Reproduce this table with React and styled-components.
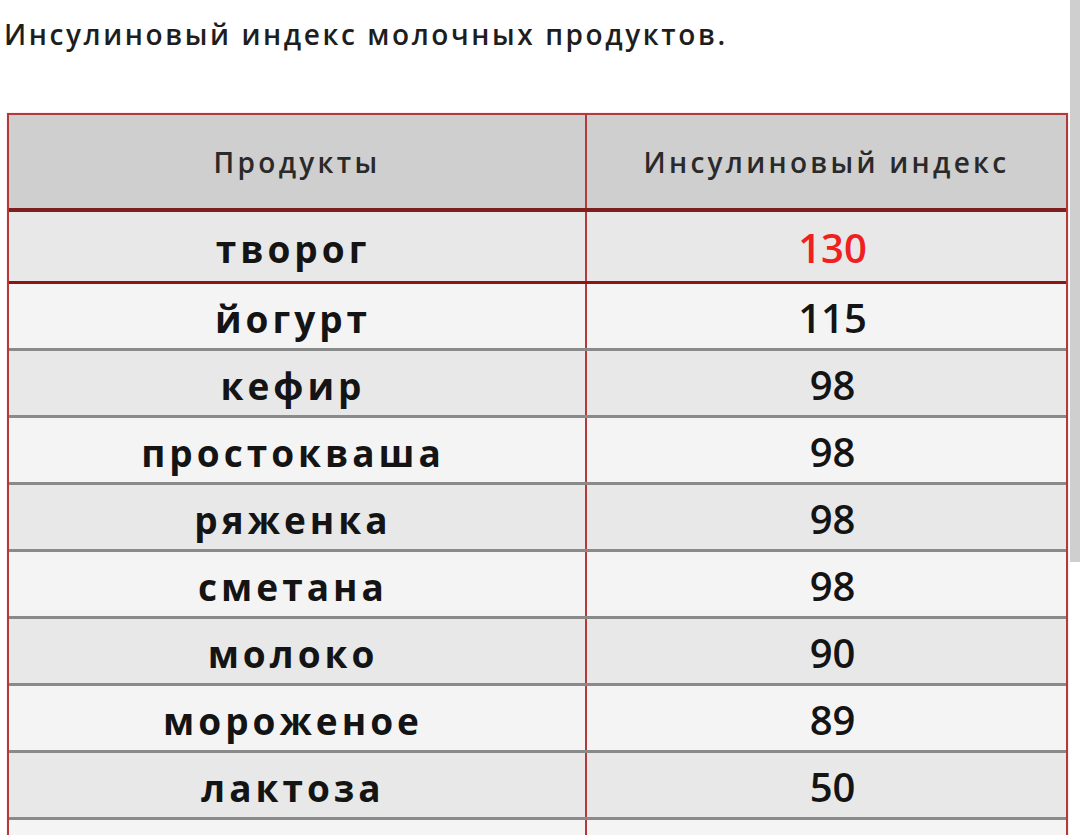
import React from "react";
import styled, { createGlobalStyle } from "styled-components";

const GlobalStyle = createGlobalStyle`
  html, body {
    margin: 0;
    padding: 0;
    background: #ffffff;
  }
  body {
    font-family: "Open Sans", "Liberation Sans", sans-serif;
    color: #1b1b1b;
  }
`;

const Page = styled.div`
  display: flex;
  align-items: flex-start;
  width: 1080px;
`;

const Main = styled.div`
  flex: 1;
  padding: 16px 2px 0 7px;
`;

const SideStrip = styled.div`
  width: 10px;
  height: 562px;
  background: #cfcfcf;
`;

const Title = styled.h1`
  margin: 0 0 61px -3px;
  font-size: 28px;
  line-height: 36px;
  font-weight: 600;
  letter-spacing: 2.6px;
  color: #1e1e1e;
`;

const Table = styled.div`
  border: 2px solid #b23a3a;
  border-bottom: none;
  box-shadow: 0 0 1px #f2a0a0;
`;

const Row = styled.div`
  display: grid;
  grid-template-columns: 576px 1fr;
  height: ${(p) => p.$height}px;
  background: ${(p) => p.$bg};
  border-bottom: ${(p) => p.$weight || 3}px solid ${(p) => p.$line};
  box-shadow: 0 1px 0 ${(p) => p.$shade};
`;

const Cell = styled.div`
  display: flex;
  align-items: center;
  justify-content: center;
  & + & {
    border-left: 2px solid #b23a3a;
  }
`;

const HeadText = styled.span`
  font-size: 28px;
  font-weight: 600;
  letter-spacing: 3.3px;
  color: #2a2a2a;
`;

const Word = styled.span`
  font-size: 37px;
  font-weight: 700;
  letter-spacing: 4px;
  color: #141414;
  transform: translate(-4px, 2px);
`;

const Value = styled.span`
  font-size: 40px;
  font-weight: 600;
  color: ${(p) => (p.$accent ? "#f02020" : "#141414")};
  transform: translate(6px, 1px);
`;

const rows = [
  { name: "творог", value: "130", accent: true },
  { name: "йогурт", value: "115" },
  { name: "кефир", value: "98" },
  { name: "простокваша", value: "98" },
  { name: "ряженка", value: "98" },
  { name: "сметана", value: "98" },
  { name: "молоко", value: "90" },
  { name: "мороженое", value: "89" },
  { name: "лактоза", value: "50" },
  { name: "сыр", value: "45" },
];

const App = () => {
  return (
    <>
      <GlobalStyle />
      <Page>
        <Main>
          <Title>Инсулиновый индекс молочных продуктов.</Title>
          <Table>
            <Row
              $height={93}
              $weight={4}
              $bg="#cfcfcf"
              $line="#7e1f1f"
              $shade="#c98a8a"
            >
              <Cell>
                <HeadText>Продукты</HeadText>
              </Cell>
              <Cell>
                <HeadText>Инсулиновый индекс</HeadText>
              </Cell>
            </Row>
            {rows.map((row, index) => (
              <Row
                key={row.name}
                $height={index === 0 ? 69 : 64}
                $bg={index % 2 === 0 ? "#e8e8e8" : "#f4f4f4"}
                $line={index === 0 ? "#8e1414" : "#8a8a8a"}
                $shade={index === 0 ? "#e9a4a4" : "#c4c4c4"}
              >
                <Cell>
                  <Word>{row.name}</Word>
                </Cell>
                <Cell>
                  <Value $accent={row.accent}>{row.value}</Value>
                </Cell>
              </Row>
            ))}
          </Table>
        </Main>
        <SideStrip />
      </Page>
    </>
  );
};

export default App;
